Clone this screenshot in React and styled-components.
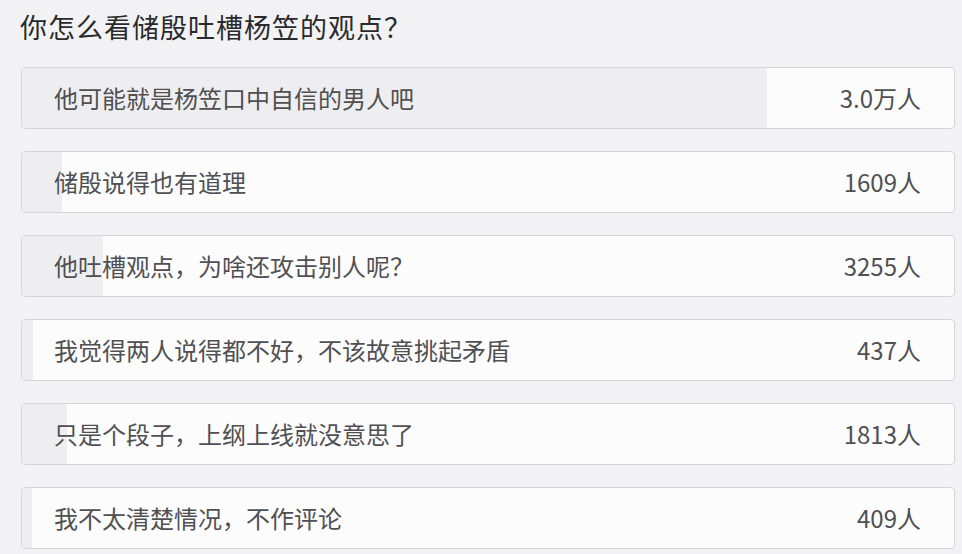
import React from 'react'
import styled, { createGlobalStyle } from 'styled-components'

const GlobalStyle = createGlobalStyle`
body {
  margin: 0;
  background-color: #f2f2f5;
  font-family: "Noto Sans CJK SC", "Noto Sans", sans-serif;
}
`

const Page = styled.div`
padding: 8px 7px 0 20px;
`
const Question = styled.h1`
margin: 0;
height: 38px;
line-height: 38px;
font-size: 27px;
font-weight: 400;
color: #2a2a2c;
letter-spacing: 1px;
`
const OptionList = styled.div`
display: grid;
grid-template-rows: repeat(6, 62px);
row-gap: 22px;
margin-top: 21px;
padding-left: 1px;
`
const OptionCard = styled.div`
position: relative;
overflow: hidden;
display: flex;
align-items: center;
justify-content: space-between;
padding: 0 33px 2px 32px;
background-color: #fcfcfd;
border: 1px solid #d6d6da;
border-radius: 4px;
font-size: 24px;
color: #505052;
`
const Fill = styled.div`
position: absolute;
left: 0;
top: 0;
bottom: 0;
background-color: #eeeef1;
`
const Label = styled.span`
position: relative;
`
const Count = styled.span`
position: relative;
`

const options = [
  { text: '他可能就是杨笠口中自信的男人吧', votes: 30000, label: '3.0万人' },
  { text: '储殷说得也有道理', votes: 1609, label: '1609人' },
  { text: '他吐槽观点，为啥还攻击别人呢？', votes: 3255, label: '3255人' },
  { text: '我觉得两人说得都不好，不该故意挑起矛盾', votes: 437, label: '437人' },
  { text: '只是个段子，上纲上线就没意思了', votes: 1813, label: '1813人' },
  { text: '我不太清楚情况，不作评论', votes: 409, label: '409人' },
]

const total = options.reduce((sum, o) => sum + o.votes, 0)

export default function App() {
  return (
    <Page lang="zh-CN">
      <GlobalStyle />
      <Question>你怎么看储殷吐槽杨笠的观点？</Question>
      <OptionList>
        {options.map((o) => (
          <OptionCard key={o.text}>
            <Fill style={{ width: `${(o.votes / total) * 100}%` }} />
            <Label>{o.text}</Label>
            <Count>{o.label}</Count>
          </OptionCard>
        ))}
      </OptionList>
    </Page>
  )
}
